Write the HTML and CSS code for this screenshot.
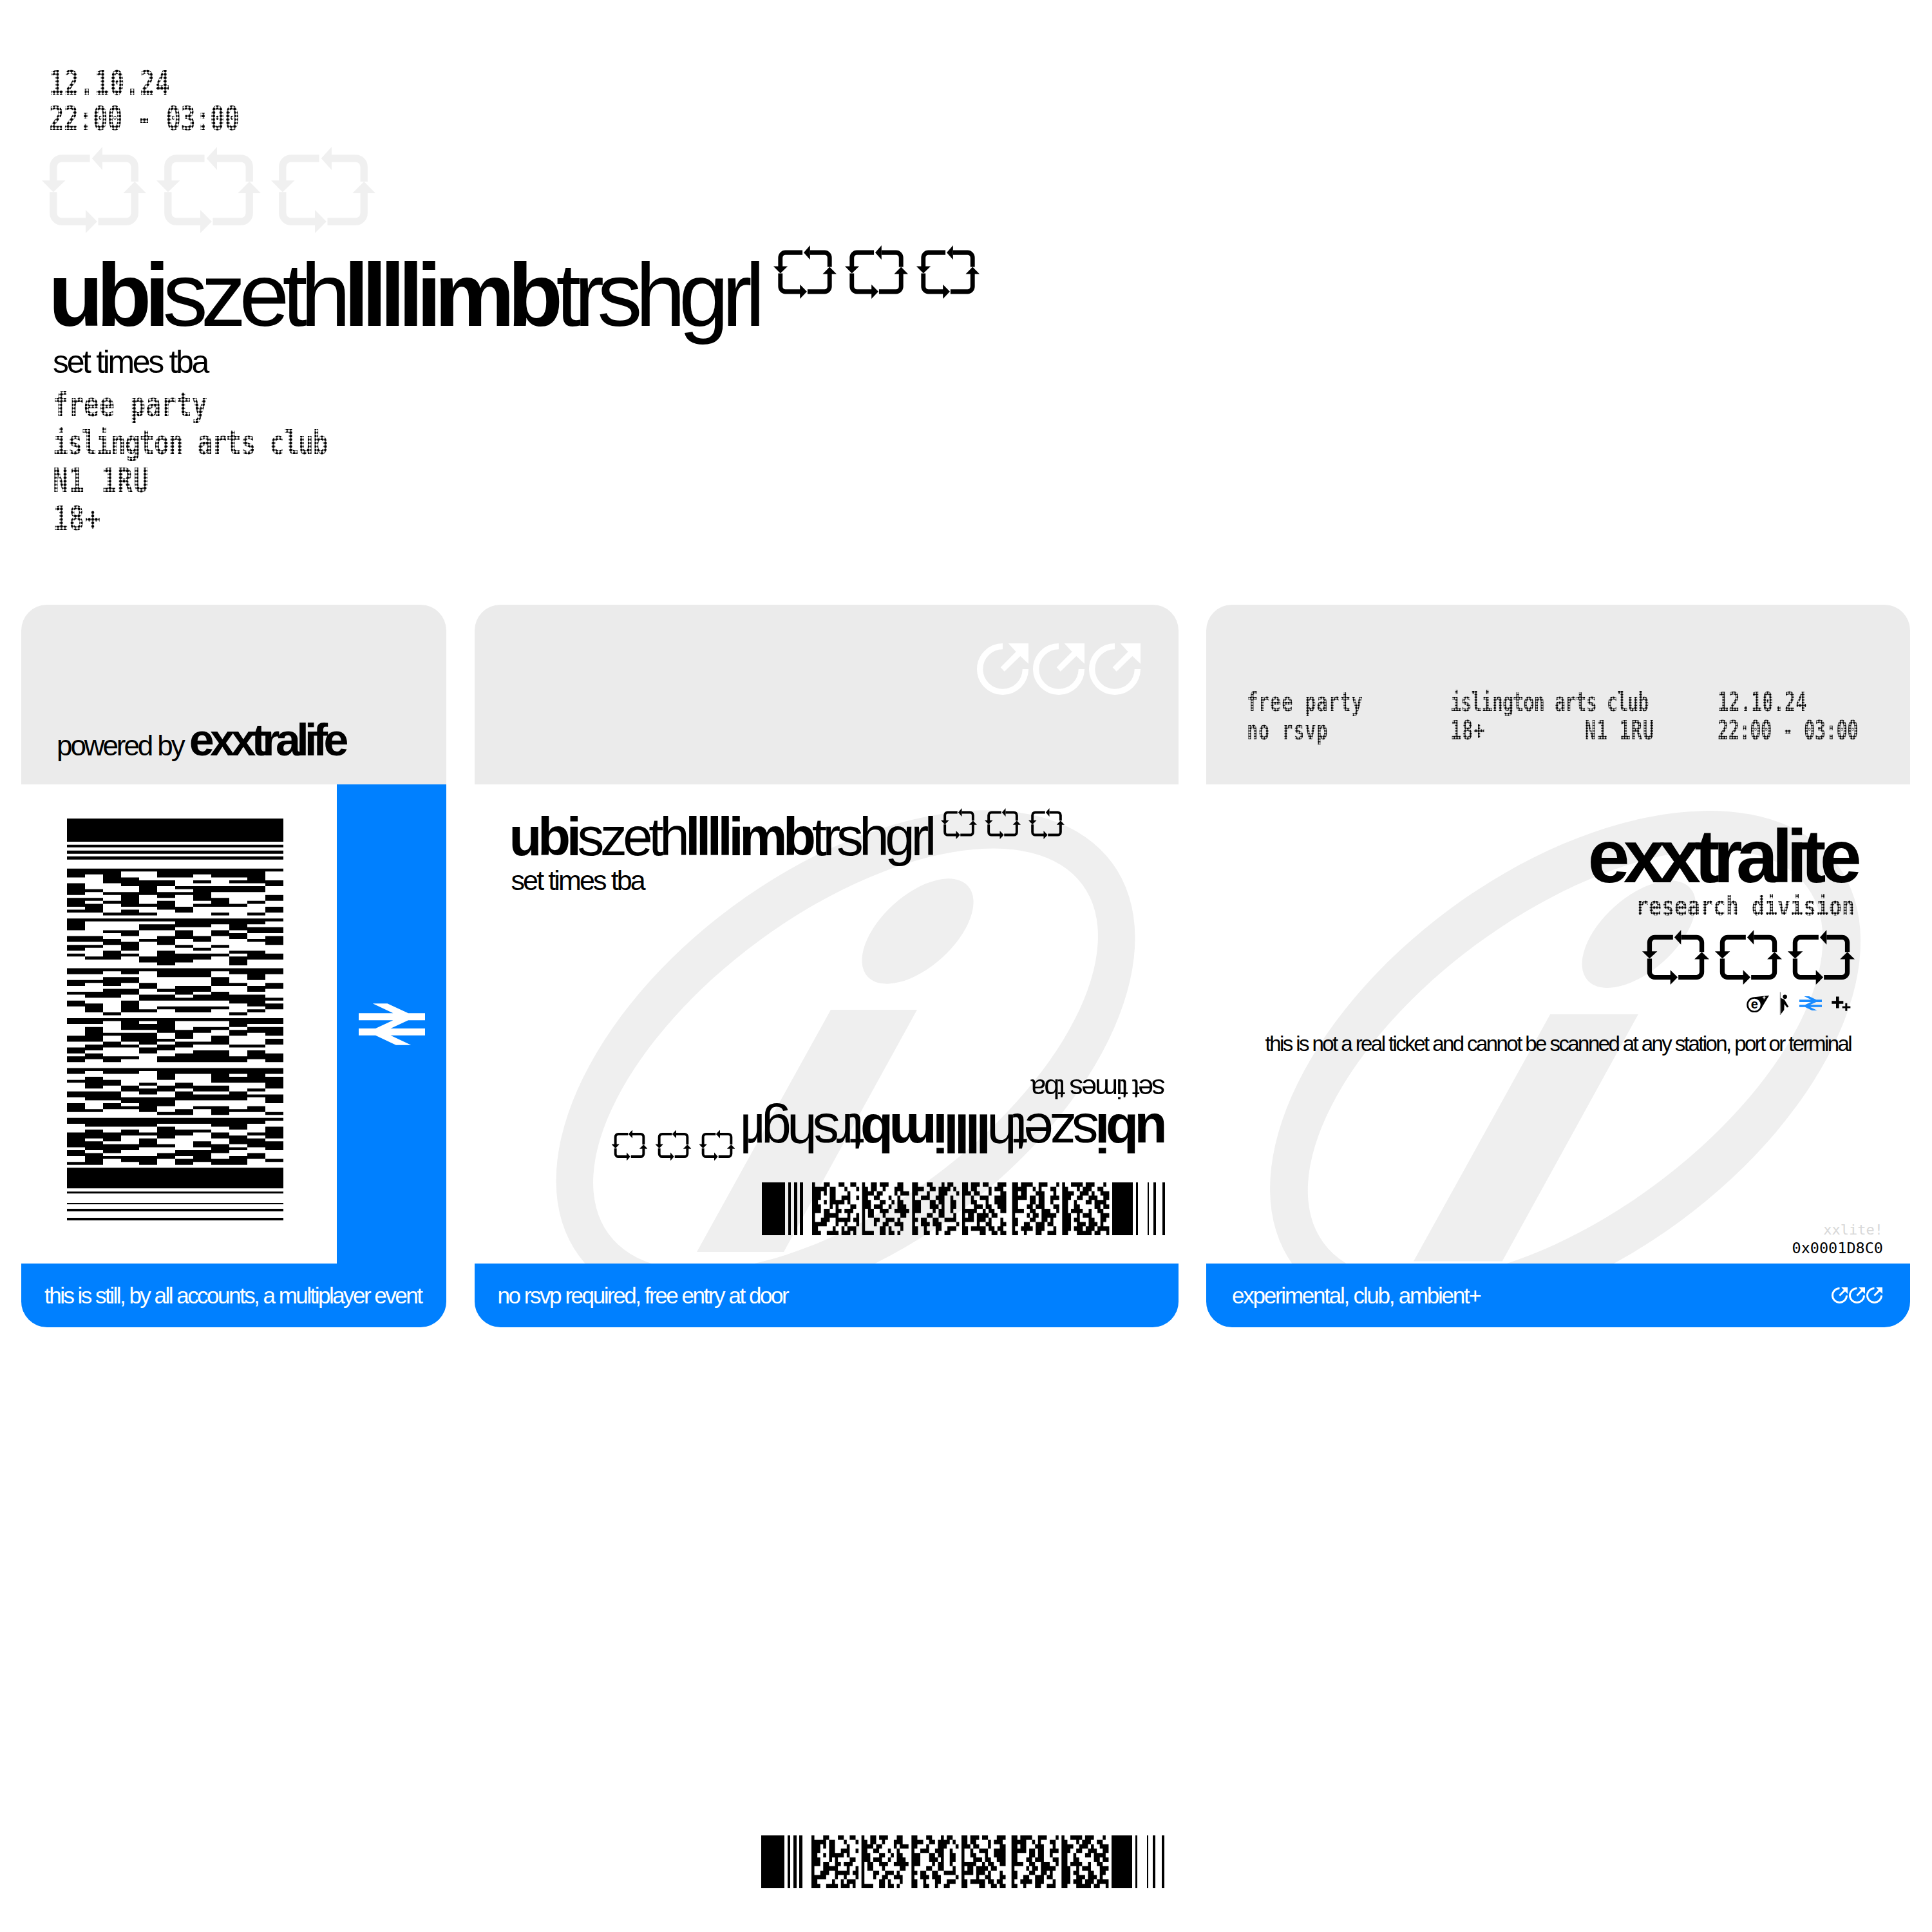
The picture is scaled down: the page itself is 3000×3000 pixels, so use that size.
FILE: index.html
```html
<!DOCTYPE html>
<html lang="en">
<head>
    <meta charset="UTF-8">
    <title>ubiszethllllimbtrshgrl - exxtralite</title>
    <link rel="stylesheet" href="styles.css">
</head>
<body>
    <!-- Shared drawings -->
    <svg class="defs" aria-hidden="true">
        <defs>
            <symbol id="loop" viewBox="0 0 100 82" preserveAspectRatio="none">
                <path class="loop-line" d="M46 11H19a8 8 0 0 0-8 8V33"/>
                <path d="M0 32H22.5L11 43Z"/>
                <path class="loop-line" d="M58 11H81a8 8 0 0 1 8 8V33"/>
                <path d="M48 11 58 0V22Z"/>
                <path class="loop-line" d="M89 43V63a8 8 0 0 1-8 8H54"/>
                <path d="M78 44H100L89 33Z"/>
                <path class="loop-line" d="M11 43V63a8 8 0 0 0 8 8H43"/>
                <path d="M42 60V82L53 71Z"/>
            </symbol>
            <symbol id="spin" viewBox="0 0 240 240">
                <path class="spin-line" d="M120 14A106 106 0 1 0 226 120"/>
                <path d="M146 0H240V95L202 59 128 131 110 112 182 39Z"/>
            </symbol>
            <symbol id="rail" viewBox="170 172 308 193">
                <path d="M170 217H330L235 172H303L400 217H478V250H400L318 288H478V320H318L413 365H343L248 320H170V288H248L330 250H170Z"/>
            </symbol>
            <symbol id="mark" viewBox="0 0 1093 744" preserveAspectRatio="xMinYMin slice">
                <path fill-rule="evenodd" d="M576 427m-414 305a514 295 -36.4 1 1 828-610a514 295 -36.4 1 1-828 610ZM208 698a457 228 -36.4 1 0 736-542a457 228 -36.4 1 0-736 542Z"/>
                <ellipse cx="688" cy="228" rx="105" ry="56" transform="rotate(-42 688 228)"/>
                <path d="M553 350H687L480 726H345Z"/>
            </symbol>
            <path id="pdf417"/>
        </defs>
    </svg>

    <header class="intro">
        <div class="dot dot-lg date">
            <div>12.10.24</div>
            <div class="ls-narrow">22:00 - 03:00</div>
        </div>
        <div class="loops loops-ghost">
            <svg><use href="#loop"/></svg><svg><use href="#loop"/></svg><svg><use href="#loop"/></svg>
        </div>
        <div class="event event-lg">
            <div class="event-head">
                <h1 class="event-title"><b>ubi</b>szeth<b>llllimb</b>trshgrl</h1>
                <div class="loops">
                    <svg><use href="#loop"/></svg><svg><use href="#loop"/></svg><svg><use href="#loop"/></svg>
                </div>
            </div>
            <p class="event-sub">set times tba</p>
        </div>
        <div class="dot dot-lg details">
            <div>free party</div>
            <div class="ls-tight">islington arts club</div>
            <div class="ls-wide">N1 1RU</div>
            <div class="ls-wide">18+</div>
        </div>
    </header>

    <main class="tickets">
        <!-- Stub -->
        <section class="ticket">
            <div class="ticket-top top-stub">
                <p class="powered">powered by <b>exxtralife</b></p>
            </div>
            <div class="ticket-body body-stub">
                <div class="stub-code">
                    <svg class="code-tall" viewBox="0 0 12 626" preserveAspectRatio="none"><use href="#pdf417" transform="matrix(0 1 -1 0 12 0)"/></svg>
                </div>
                <div class="stub-rail">
                    <svg><use href="#rail"/></svg>
                </div>
            </div>
            <p class="ticket-foot foot-stub">this is still, by all accounts, a multiplayer event</p>
        </section>

        <!-- Main ticket -->
        <section class="ticket">
            <div class="ticket-top top-spin">
                <svg><use href="#spin"/></svg><svg><use href="#spin"/></svg><svg><use href="#spin"/></svg>
            </div>
            <div class="ticket-body body-main">
                <svg class="watermark"><use href="#mark"/></svg>
                <div class="event event-sm">
                    <div class="event-head">
                        <div class="event-title"><b>ubi</b>szeth<b>llllimb</b>trshgrl</div>
                        <div class="loops">
                            <svg><use href="#loop"/></svg><svg><use href="#loop"/></svg><svg><use href="#loop"/></svg>
                        </div>
                    </div>
                    <p class="event-sub">set times tba</p>
                </div>
                <div class="event event-sm event-flip">
                    <div class="event-head">
                        <div class="event-title"><b>ubi</b>szeth<b>llllimb</b>trshgrl</div>
                        <div class="loops">
                            <svg><use href="#loop"/></svg><svg><use href="#loop"/></svg><svg><use href="#loop"/></svg>
                        </div>
                    </div>
                    <p class="event-sub">set times tba</p>
                </div>
                <svg class="code-wide code-main" viewBox="0 0 626 12" preserveAspectRatio="none"><use href="#pdf417"/></svg>
            </div>
            <p class="ticket-foot">no rsvp required, free entry at door</p>
        </section>

        <!-- Info ticket -->
        <section class="ticket">
            <div class="ticket-top top-info">
                <div class="info-col col-what">
                    <div class="dot dot-sm ls-wide">free party</div>
                    <div class="dot dot-sm ls-wide">no rsvp</div>
                </div>
                <div class="info-col col-where">
                    <div class="dot dot-sm ls-tight">islington arts club</div>
                    <div class="dot dot-sm split ls-wide"><span>18+</span><span>N1 1RU</span></div>
                </div>
                <div class="info-col col-when">
                    <div class="dot dot-sm">12.10.24</div>
                    <div class="dot dot-sm ls-narrow">22:00 - 03:00</div>
                </div>
            </div>
            <div class="ticket-body body-info">
                <svg class="watermark watermark-info"><use href="#mark"/></svg>
                <div class="brand">exxtralite</div>
                <div class="brand-sub"><div class="dot dot-md">research division</div></div>
                <div class="loops loops-brand">
                    <svg><use href="#loop"/></svg><svg><use href="#loop"/></svg><svg><use href="#loop"/></svg>
                </div>
                <div class="badges">
                    <svg class="badge-logo" viewBox="40 25 112 86">
                        <circle cx="80" cy="75" r="37"/>
                        <path d="M80 38 150 30 112 93Z"/>
                        <circle cx="80" cy="75" r="29" fill="#fff"/>
                        <text x="80" y="94" class="badge-e">e</text>
                        <path fill="#fff" d="M124 34h4v5h5v4h-5v5h-4v-5h-5v-4h5Z"/>
                    </svg>
                    <svg class="badge-exit" viewBox="196 12 48 110">
                        <path fill="#888" d="M198 14h4v108h-4Z"/>
                        <circle cx="222" cy="36" r="10"/>
                        <path d="M202 42 219 49 240 84 232 87 219 70 218 98 203 118Z"/>
                    </svg>
                    <svg class="badge-rail"><use href="#rail"/></svg>
                    <svg class="badge-plus" viewBox="434 34 90 68">
                        <path d="M455 35h14v20h20v14h-20v20h-14v-20h-20v-14h20Z"/>
                        <path d="M498 66h9v14h15v9h-15v13h-9v-13h-14v-9h14Z"/>
                    </svg>
                </div>
                <p class="notice">this is not a real ticket and cannot be scanned at any station, port or terminal</p>
                <div class="serial">
                    <span class="serial-tag">xxlite!</span>
                    <span>0x0001D8C0</span>
                </div>
            </div>
            <div class="ticket-foot foot-info">
                <span>experimental, club, ambient+</span>
                <span class="foot-spin"><svg><use href="#spin"/></svg><svg><use href="#spin"/></svg><svg><use href="#spin"/></svg></span>
            </div>
        </section>
    </main>

    <svg class="code-wide code-end" viewBox="0 0 626 12" preserveAspectRatio="none"><use href="#pdf417"/></svg>

    <script src="barcode.js"></script>
</body>
</html>
```
FILE: styles.css
```css
/* Reset and base styles */
* {
    box-sizing: border-box;
    margin: 0;
    padding: 0;
}

body {
    width: 3000px;
    padding: 0 33px;
    font-family: "Liberation Sans", Arial, sans-serif;
    color: #000;
    background: #fff;
}

.defs {
    position: absolute;
    width: 0;
    height: 0;
}

/* Dotted display text */
.dot {
    --sx: .75;
    --pitch: 5.4px;
    width: calc(100% / var(--sx));
    font-family: "DejaVu Sans Mono", monospace;
    font-weight: 700;
    white-space: nowrap;
    transform: scaleX(var(--sx));
    transform-origin: left top;
    -webkit-mask-image: radial-gradient(closest-side, #000 78%, transparent 96%);
    mask-image: radial-gradient(closest-side, #000 78%, transparent 96%);
    -webkit-mask-size: calc(var(--pitch) / var(--sx)) var(--pitch);
    mask-size: calc(var(--pitch) / var(--sx)) var(--pitch);
}

.dot-lg {
    font-size: 52px;
}

.dot-md {
    --sx: .81;
    --pitch: 4.4px;
    font-size: 41px;
    line-height: 44px;
}

.dot-sm {
    --sx: .72;
    --pitch: 4.2px;
    font-size: 40px;
    line-height: 44px;
}

.split {
    display: flex;
    justify-content: space-between;
}

.ls-tight {
    letter-spacing: -.04em;
}

.ls-narrow {
    letter-spacing: -.02em;
}

.ls-wide {
    letter-spacing: .025em;
}

/* Recycling loops */
.loops {
    display: flex;
}

.loops svg {
    display: block;
    flex: none;
}

.loop-line {
    fill: none;
    stroke: currentColor;
    stroke-width: 7;
}

.spin-line {
    fill: none;
    stroke: currentColor;
    stroke-width: 28;
}

/* Poster head */
.intro {
    padding: 102px 0 104px 45px;
}

.date {
    margin-left: -2px;
    line-height: 55px;
}

.loops-ghost {
    gap: 16px;
    margin: 16px 0 0 -13px;
    color: #f0f0f0;
    fill: #f0f0f0;
}

.loops-ghost svg {
    width: 162px;
    height: 134px;
}

.details {
    --sx: .767;
    margin: 12px 0 0 4px;
    line-height: 59px;
}

/* Event block, used at three sizes */
.event-head {
    display: flex;
    align-items: flex-start;
}

.event-title {
    font-weight: 400;
    line-height: 1;
    letter-spacing: -.0765em;
    white-space: nowrap;
}

.event-lg {
    margin-top: 26px;
}

.event-lg .event-title {
    margin-left: -3px;
    font-size: 140px;
}

.event-lg .loops {
    gap: 13px;
    margin: -7px 0 0 24px;
}

.event-lg .loops svg {
    width: 98px;
    height: 83px;
}

.event-sub {
    letter-spacing: -.067em;
    line-height: 1;
    white-space: nowrap;
}

.event-lg .event-sub {
    margin: 9px 0 0 4px;
    font-size: 50px;
}

.event-sm .event-title {
    font-size: 83.5px;
}

.event-sm .loops {
    gap: 12px;
    margin: -3px 0 0 13px;
}

.event-sm .loops svg {
    width: 56px;
    height: 48px;
}

.event-sm .event-sub {
    margin: 4px 0 0 3px;
    font-size: 43px;
}

/* Tickets */
.tickets {
    display: grid;
    grid-template-columns: 660px 1093px 1093px;
    column-gap: 43.5px;
}

.ticket {
    display: grid;
    grid-template-rows: 279px 744px 99px;
    border-radius: 40px;
    overflow: hidden;
}

.ticket-top {
    background: #ebebeb;
}

.ticket-body {
    position: relative;
    overflow: hidden;
}

.ticket-foot {
    padding: 0 36px;
    font-size: 35px;
    line-height: 99px;
    letter-spacing: -.07em;
    white-space: nowrap;
    color: #fff;
    background: #0080ff;
}

.foot-stub {
    letter-spacing: -.072em;
}

/* Stub */
.top-stub {
    display: flex;
    align-items: flex-end;
    padding: 0 0 29px 55px;
}

.powered {
    font-size: 44px;
    letter-spacing: -.07em;
}

.powered b {
    font-size: 70px;
    letter-spacing: -.095em;
}

.body-stub {
    display: flex;
}

.stub-code {
    flex: 1;
    padding: 53px 0 0 71px;
}

.code-tall {
    display: block;
    width: 336px;
    height: 624px;
}

.stub-rail {
    display: flex;
    align-items: center;
    justify-content: center;
    width: 170px;
    fill: #fff;
    background: #0080ff;
}

.stub-rail svg {
    width: 103px;
    height: 65px;
}

.code-wide {
    display: block;
    width: 626px;
    height: 82px;
}

/* Main ticket */
.top-spin {
    display: flex;
    justify-content: flex-end;
    gap: 7px;
    padding: 60px 59px 0 0;
    color: #fff;
    fill: #fff;
}

.top-spin svg {
    width: 80px;
    height: 80px;
}

.watermark {
    position: absolute;
    top: 0;
    left: 0;
    width: 100%;
    height: 100%;
    fill: #efefef;
}

.watermark-info {
    left: -30px;
    width: calc(100% + 22px);
}

.body-main {
    display: flex;
    flex-direction: column;
    align-items: flex-start;
    padding: 40px 21px 44px 54px;
}

.body-main > .event,
.body-main > .code-wide {
    position: relative;
}

.event-flip {
    align-self: flex-end;
    margin: auto -4px 37px 0;
    transform: rotate(180deg);
}

.code-main {
    align-self: flex-end;
}

/* Info ticket */
.top-info {
    display: flex;
    padding: 129px 0 0 63px;
}

.info-col {
    width: 240px;
}

.col-what {
    width: 316px;
}

.col-where {
    width: 317px;
    margin-right: 98px;
}

.body-info {
    display: flex;
    flex-direction: column;
    align-items: flex-end;
    padding-right: 42px;
}

.body-info > :not(.watermark) {
    position: relative;
}

.brand {
    margin: 62px 43px 0 0;
    font-size: 117px;
    font-weight: 700;
    line-height: 100px;
    letter-spacing: -.084em;
    white-space: nowrap;
}

.brand-sub {
    width: 342px;
    margin: 5px 42px 0 0;
}

.loops-brand {
    gap: 9px;
    margin: 15px 44px 0 0;
}

.loops-brand svg {
    width: 104px;
    height: 85px;
}

.badges {
    display: flex;
    align-items: center;
    gap: 15px;
    height: 32px;
    margin: 13px 50px 0 0;
}

.badge-logo {
    width: 37px;
    height: 28px;
}

.badge-e {
    font-size: 62px;
    font-weight: 700;
    text-anchor: middle;
}

.badge-exit {
    width: 16px;
    height: 36px;
}

.badge-rail {
    width: 35px;
    height: 22px;
    fill: #1a8cff;
}

.badge-plus {
    width: 30px;
    height: 23px;
}

.notice {
    margin: 27px 50px 0 0;
    font-size: 33px;
    line-height: 40px;
    letter-spacing: -.078em;
    white-space: nowrap;
}

.serial {
    display: flex;
    flex-direction: column;
    align-items: flex-end;
    margin-top: auto;
    padding-bottom: 10px;
    font-family: "DejaVu Sans Mono", monospace;
    font-size: 23.5px;
    line-height: 28px;
}

.serial-tag {
    font-size: 22px;
    color: #d8d8d8;
}

.foot-info {
    display: flex;
    align-items: center;
    justify-content: space-between;
    padding-right: 43px;
    padding-left: 40px;
    letter-spacing: -.064em;
}

.foot-spin {
    display: flex;
    gap: 2px;
    fill: #fff;
    color: #fff;
}

.foot-spin svg {
    width: 25px;
    height: 25px;
}

/* Loose barcode at the foot of the sheet */
.code-end {
    margin: 789px 0 0 1149px;
}
```
FILE: barcode.js
```js
// Draws the PDF417-style symbol shared by every barcode on the page.
// Layout units: x in px along the 626 wide symbol, y in rows (12 rows).
(function () {
    const ROWS = 12;
    const BLOCKS = 6;
    const MODULE = 466 / (BLOCKS * 17);
    const START = [[0, 36], [41, 45], [50, 55], [59, 64]];
    const STOP = [[544, 576], [581, 584], [599, 601], [608, 612], [622, 626]];

    let seed = 41729;
    function rand(n) {
        seed = (seed * 1103515245 + 12345) % 2147483648;
        return Math.floor(seed / 65536) % n;
    }

    // One codeword: four bars and four spaces, 17 modules long
    function codeword() {
        const runs = [1, 1, 1, 1, 1, 1, 1, 1];
        let left = 9;
        while (left > 0) {
            const i = rand(8);
            if (runs[i] < 5) {
                runs[i]++;
                left--;
            }
        }
        return runs;
    }

    let d = '';
    START.concat(STOP).forEach(function (bar) {
        d += 'M' + bar[0] + ' 0H' + bar[1] + 'V' + ROWS + 'H' + bar[0] + 'Z';
    });

    for (let row = 0; row < ROWS; row++) {
        for (let block = 0; block < BLOCKS; block++) {
            let x = 78 + block * 17 * MODULE;
            codeword().forEach(function (run, i) {
                const end = x + run * MODULE;
                if (i % 2 === 0) {
                    d += 'M' + x.toFixed(2) + ' ' + row + 'H' + end.toFixed(2) + 'V' + (row + 1) + 'H' + x.toFixed(2) + 'Z';
                }
                x = end;
            });
        }
    }

    document.getElementById('pdf417').setAttribute('d', d);
})();
```
